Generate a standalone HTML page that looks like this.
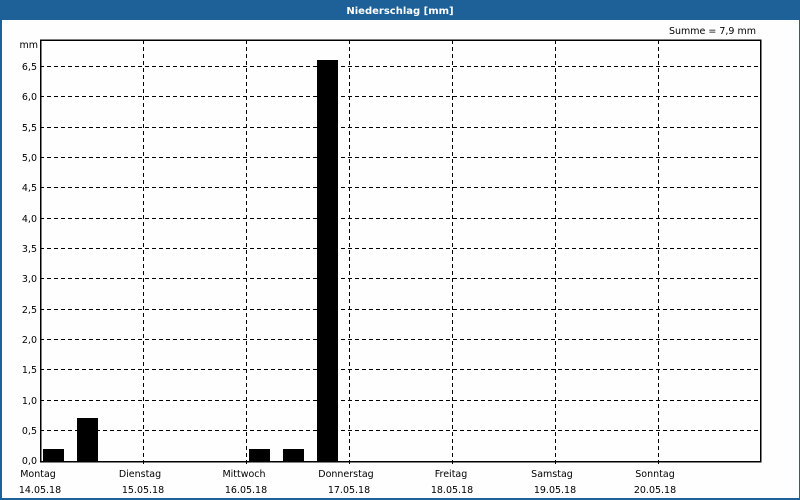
<!DOCTYPE html>
<html><head><meta charset="utf-8"><style>
html,body{margin:0;padding:0;background:#fff}
body{width:800px;height:500px;overflow:hidden;position:relative}
svg{display:block}
text{font-family:"DejaVu Sans","Liberation Sans",sans-serif;font-size:9.5px;fill:#000}
</style></head><body>
<svg width="800" height="500" xmlns="http://www.w3.org/2000/svg">
<rect x="0" y="0" width="800" height="500" fill="#1d6198"/>
<rect x="2" y="20" width="797" height="478" fill="#fdfefd"/>
<text x="400" y="14" text-anchor="middle" style="fill:#fff;font-weight:bold;font-size:10px">Niederschlag [mm]</text>
<text x="756" y="34" text-anchor="end">Summe = 7,9 mm</text>
<text x="38" y="48" text-anchor="end">mm</text>
<g stroke="#000" stroke-width="1" stroke-dasharray="4,3" shape-rendering="crispEdges">
<line x1="40" x2="760" y1="430.5" y2="430.5"/><line x1="40" x2="760" y1="400.5" y2="400.5"/>
<line x1="40" x2="760" y1="369.5" y2="369.5"/><line x1="40" x2="760" y1="339.5" y2="339.5"/>
<line x1="40" x2="760" y1="309.5" y2="309.5"/><line x1="40" x2="760" y1="278.5" y2="278.5"/>
<line x1="40" x2="760" y1="248.5" y2="248.5"/><line x1="40" x2="760" y1="218.5" y2="218.5"/>
<line x1="40" x2="760" y1="187.5" y2="187.5"/><line x1="40" x2="760" y1="157.5" y2="157.5"/>
<line x1="40" x2="760" y1="127.5" y2="127.5"/><line x1="40" x2="760" y1="96.5" y2="96.5"/>
<line x1="40" x2="760" y1="66.5" y2="66.5"/>
<line x1="143.5" x2="143.5" y1="40" y2="466"/><line x1="246.5" x2="246.5" y1="40" y2="466"/>
<line x1="349.5" x2="349.5" y1="40" y2="466"/><line x1="452.5" x2="452.5" y1="40" y2="466"/>
<line x1="555.5" x2="555.5" y1="40" y2="466"/><line x1="658.5" x2="658.5" y1="40" y2="466"/>
</g>
<g fill="#000">
<rect x="43" y="449" width="21" height="12"/>
<rect x="77" y="418" width="21" height="43"/>
<rect x="249" y="449" width="21" height="12"/>
<rect x="283" y="449" width="21" height="12"/>
<rect x="317" y="60" width="21" height="401"/>
</g>
<path d="M40.5 40V461.5H760.5V40H40" fill="none" stroke="#000" stroke-width="1.5" shape-rendering="crispEdges"/>
<g text-anchor="end">
<text x="37" y="464">0,0</text><text x="37" y="434">0,5</text><text x="37" y="404">1,0</text>
<text x="37" y="373">1,5</text><text x="37" y="343">2,0</text><text x="37" y="313">2,5</text>
<text x="37" y="282">3,0</text><text x="37" y="252">3,5</text><text x="37" y="222">4,0</text>
<text x="37" y="191">4,5</text><text x="37" y="161">5,0</text><text x="37" y="131">5,5</text>
<text x="37" y="100">6,0</text><text x="37" y="70">6,5</text>
</g>
<g text-anchor="middle">
<text x="38" y="477">Montag</text><text x="40" y="493">14.05.18</text>
<text x="140" y="477">Dienstag</text><text x="143" y="493">15.05.18</text>
<text x="244" y="477">Mittwoch</text><text x="246" y="493">16.05.18</text>
<text x="346" y="477">Donnerstag</text><text x="349" y="493">17.05.18</text>
<text x="451" y="477">Freitag</text><text x="452" y="493">18.05.18</text>
<text x="552" y="477">Samstag</text><text x="555" y="493">19.05.18</text>
<text x="655" y="477">Sonntag</text><text x="655" y="493">20.05.18</text>
</g>
</svg>
</body></html>
